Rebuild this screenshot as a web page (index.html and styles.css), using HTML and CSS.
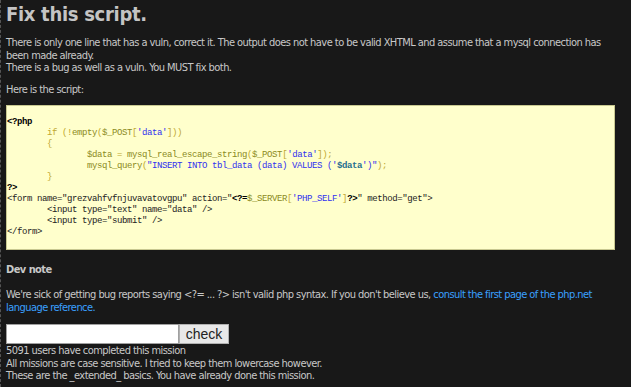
FILE: index.html
```html
<!DOCTYPE html>
<html lang="en">
<head>
    <meta charset="UTF-8">
    <title>Fix this script.</title>
    <link rel="stylesheet" href="styles.css">
</head>
<body>
    <div class="page">
        <h1 class="title">Fix this script.</h1>

        <p class="intro">There is only one line that has a vuln, correct it. The output does not have to be valid XHTML and assume that a mysql connection has been made already.<br>There is a bug as well as a vuln. You MUST fix both.</p>

        <p class="intro">Here is the script:</p>

<pre class="code">

<b class="h">&lt;?php</b>
	<span class="k">if (!</span><span class="d">empty</span><span class="k">(</span><span class="d">$_POST</span><span class="k">[</span><span class="s">'data'</span><span class="k">]))</span>
	<span class="k">{</span>
		<span class="d">$data</span> <span class="k">=</span> <span class="d">mysql_real_escape_string</span><span class="k">(</span><span class="d">$_POST</span><span class="k">[</span><span class="s">'data'</span><span class="k">]);</span>
		<span class="d">mysql_query</span><span class="k">(</span><span class="s">"INSERT INTO tbl_data (data) VALUES ('<b class="v">$data</b>')"</span><span class="k">);</span>
	<span class="k">}</span>
<b class="h">?&gt;</b>
<span class="t">&lt;form name="grezvahfvfnjuvavatovgpu" action="</span><b class="h">&lt;?=</b><span class="d">$_SERVER</span><span class="k">[</span><span class="s">'PHP_SELF'</span><span class="k">]</span><b class="h">?&gt;</b><span class="t">" method="get"&gt;</span>
<span class="t">	&lt;input type="text" name="data" /&gt;</span>
<span class="t">	&lt;input type="submit" /&gt;</span>
<span class="t">&lt;/form&gt;</span>

</pre>

        <h2 class="note-title">Dev note</h2>
        <p class="note">We're sick of getting bug reports saying &lt;?= ... ?&gt; isn't valid php syntax. If you don't believe us, <a href="#">consult the first page of the php.net language reference.</a></p>

        <form class="answer" onsubmit="return false">
            <input type="text" class="answer-input" name="solution"><button type="submit" class="answer-btn">check</button>
        </form>

        <div class="stats">
            5091 users have completed this mission<br>
            All missions are case sensitive. I tried to keep them lowercase however.<br>
            These are the _extended_ basics. You have already done this mission.
        </div>
    </div>
</body>
</html>
```

FILE: styles.css
```css
* {
    margin: 0;
    padding: 0;
    box-sizing: border-box;
}

html, body {
    background: #181818;
}

body {
    font-family: "DejaVu Sans Condensed", "DejaVu Sans", Tahoma, sans-serif;
    font-size: 11px;
    letter-spacing: -0.55px;
    line-height: 12.5px;
    color: #c8c8c8;
    min-height: 387px;
}

.page {
    width: 631px;
    min-height: 387px;
    border-left: 1px dashed #555;
    padding: 1px 16px 0 5px;
}

.title {
    font-size: 20px;
    line-height: 26px;
    font-weight: bold;
    letter-spacing: -0.3px;
    color: #c4c4c4;
    margin-bottom: 10px;
}

.intro {
    margin-bottom: 9.5px;
}

.intro + .intro {
    margin-bottom: 8.75px;
}

.code {
    background: #ffffcc;
    border: 1px solid #c8c890;
    font-family: "Liberation Mono", "DejaVu Sans Mono", monospace;
    font-size: 9px;
    letter-spacing: -0.4px;
    line-height: 11px;
    tab-size: 40px;
    color: #000;
    margin-bottom: 14px;
}

.code .h {
    color: #000;
}

.code .t {
    color: #222;
}

.code .k {
    color: #c0a830;
}

.code .d {
    color: #8a8a1c;
}

.code .s {
    color: #3030f0;
}

.code .v {
    color: #1f6f90;
}

.note-title {
    font-size: 11px;
    line-height: 12.5px;
    font-weight: bold;
    color: #c8c8c8;
    margin-bottom: 12.5px;
}

.note {
    margin-bottom: 10px;
}

.note a {
    color: #3aa0ff;
    text-decoration: none;
}

.answer {
    display: flex;
    height: 20px;
}

.answer-input {
    width: 173px;
    height: 20px;
    border: 1px solid #a0a0a0;
    background: #fff;
}

.answer-btn {
    width: 50px;
    height: 20px;
    border: 1px solid #b0b0b0;
    background: #e8e8e8;
    font-family: "Liberation Sans", Arial, sans-serif;
    font-size: 14px;
    letter-spacing: 0;
    color: #222;
}

.stats {
    margin-top: 1px;
    line-height: 12.3px;
}
```
